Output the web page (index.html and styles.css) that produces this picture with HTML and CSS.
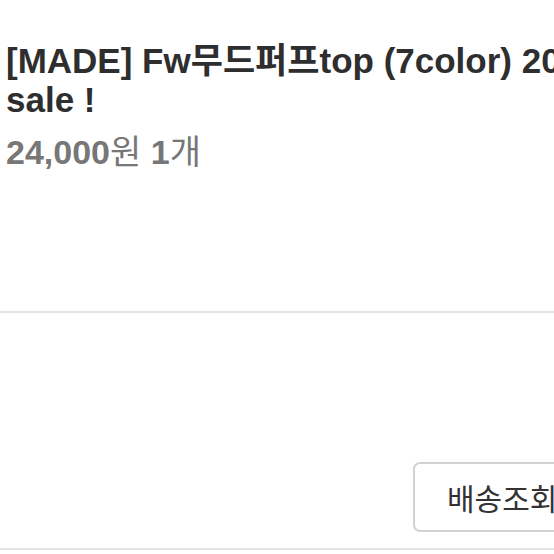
FILE: index.html
```html
<!DOCTYPE html>
<html lang="ko">
<head>
<meta charset="utf-8">
<link rel="stylesheet" href="styles.css">
</head>
<body>
<div class="page">
  <section class="product">
    <h1 class="title">[MADE] Fw무드퍼프top (7color) 20% sale !</h1>
    <p class="price"><b>24,000</b>원 <b>1</b>개</p>
  </section>
  <section class="actions">
    <button class="btn" type="button">배송조회</button>
  </section>
</div>
</body>
</html>
```

FILE: styles.css
```css
html, body {
  margin: 0;
  padding: 0;
  background: #fff;
  overflow: hidden;
}
.page {
  width: 660px;
  font-family: "Liberation Sans", "Noto Sans CJK KR", sans-serif;
}
.product {
  padding: 41px 0 139px 6px;
  border-bottom: 2px solid #e2e2e2;
}
.title {
  margin: 0;
  font-size: 35px;
  line-height: 39px;
  font-weight: 700;
  color: #2e2e2e;
  width: 620px;
}
.price {
  margin: 13px 0 0;
  font-size: 34px;
  line-height: 40px;
  color: #777;
  font-weight: 400;
}
.price b {
  font-weight: 700;
}
.actions {
  display: flex;
  justify-content: flex-end;
  padding: 149px 61px 16px 0;
  border-bottom: 2px solid #e4e4e4;
}
.btn {
  box-sizing: border-box;
  height: 70px;
  width: 186px;
  padding: 0 0 0 32px;
  text-align: left;
  background: #fff;
  border: 2px solid #d2d2d2;
  border-radius: 7px;
  font-family: "Noto Sans CJK KR", sans-serif;
  font-size: 30px;
  color: #333;
}
```
